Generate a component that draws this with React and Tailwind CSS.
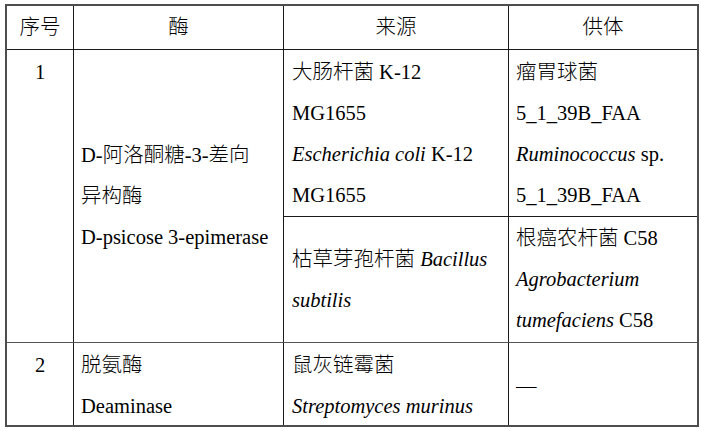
const font = {
  fontFamily: '"Liberation Serif", "Noto Sans CJK SC", serif',
};

const Cell = ({ className = "", children }) => (
  <div className={`text-[20.5px] font-light leading-[41px] text-black ${className}`}>
    {children}
  </div>
);

const App = () => {
  return (
    <div className="w-[701px] h-[431px] bg-white overflow-hidden pt-[4px] pl-[5px]" style={font}>
      <div className="w-[694px] border-2 border-[#4d4d4d] flex flex-col">
        {/* header */}
        <div className="h-[44px] flex border-b border-[#1a1a1a]">
          <Cell className="w-[67px] border-r border-[#1a1a1a] flex items-center justify-center">
            序号
          </Cell>
          <Cell className="w-[210px] border-r border-[#1a1a1a] flex items-center justify-center">
            酶
          </Cell>
          <Cell className="w-[225px] border-r border-[#1a1a1a] flex items-center justify-center">
            来源
          </Cell>
          <Cell className="flex-1 flex items-center justify-center">供体</Cell>
        </div>

        {/* row 1 */}
        <div className="h-[293px] flex border-b border-[#555]">
          <Cell className="w-[67px] border-r border-[#1a1a1a] pt-[2px] text-center">
            1
          </Cell>
          <Cell className="w-[210px] border-r border-[#1a1a1a] pl-[7px] flex flex-col justify-center">
            <span>D-阿洛酮糖-3-差向</span>
            <span>异构酶</span>
            <span>D-psicose 3-epimerase</span>
          </Cell>
          <div className="flex-1 flex flex-col">
            <div className="h-[167px] flex border-b border-[#1a1a1a]">
              <Cell className="w-[225px] border-r border-[#1a1a1a] pl-[8px] pt-[2px] flex flex-col">
                <span>大肠杆菌 K-12</span>
                <span>MG1655</span>
                <span>
                  <i>Escherichia coli</i> K-12
                </span>
                <span>MG1655</span>
              </Cell>
              <Cell className="flex-1 pl-[7px] pt-[2px] flex flex-col">
                <span>瘤胃球菌</span>
                <span>5_1_39B_FAA</span>
                <span>
                  <i>Ruminococcus</i> sp.
                </span>
                <span>5_1_39B_FAA</span>
              </Cell>
            </div>
            <div className="flex-1 flex">
              <Cell className="w-[225px] border-r border-[#1a1a1a] pl-[8px] flex flex-col justify-center">
                <span>
                  枯草芽孢杆菌 <i>Bacillus</i>
                </span>
                <span>
                  <i>subtilis</i>
                </span>
              </Cell>
              <Cell className="flex-1 pl-[7px] flex flex-col justify-center">
                <span>根癌农杆菌 C58</span>
                <span>
                  <i>Agrobacterium</i>
                </span>
                <span>
                  <i>tumefaciens</i> C58
                </span>
              </Cell>
            </div>
          </div>
        </div>

        {/* row 2 */}
        <div className="h-[82px] flex">
          <Cell className="w-[67px] border-r border-[#1a1a1a] pt-[2px] text-center">
            2
          </Cell>
          <Cell className="w-[210px] border-r border-[#1a1a1a] pl-[7px] pt-[2px] flex flex-col">
            <span>脱氨酶</span>
            <span>Deaminase</span>
          </Cell>
          <Cell className="w-[225px] border-r border-[#1a1a1a] pl-[8px] pt-[2px] flex flex-col">
            <span>鼠灰链霉菌</span>
            <span>
              <i>Streptomyces murinus</i>
            </span>
          </Cell>
          <Cell className="flex-1 pl-[7px] pt-[4px] flex items-center">—</Cell>
        </div>
      </div>
    </div>
  );
};

export default App;
